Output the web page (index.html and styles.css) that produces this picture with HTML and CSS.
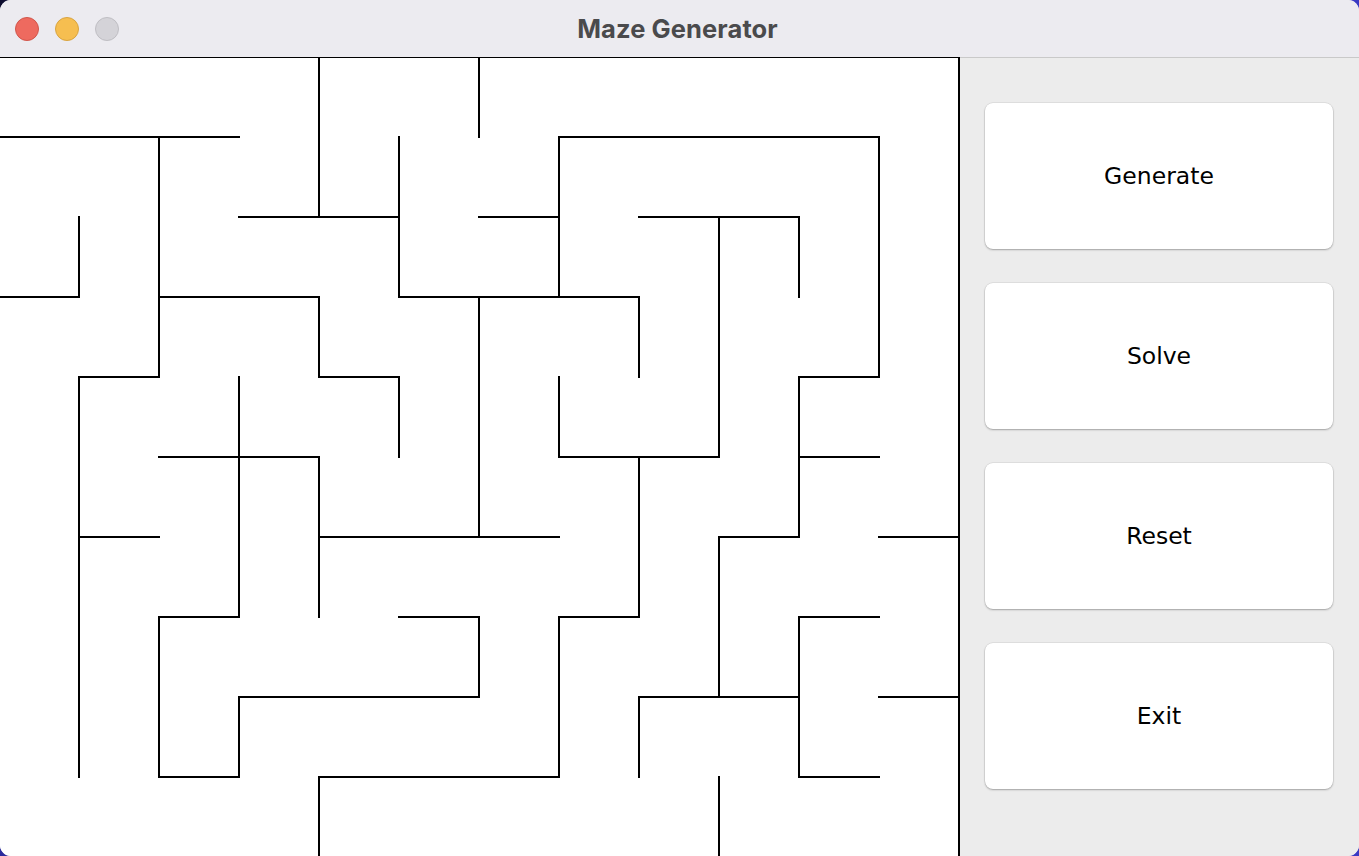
FILE: index.html
```html
<!DOCTYPE html>
<html lang="en">
<head>
<meta charset="utf-8">
<title>Maze Generator</title>
<link rel="stylesheet" href="styles.css">
</head>
<body>
<div class="window">
  <header class="titlebar">
    <div class="lights">
      <span class="light light-close"></span>
      <span class="light light-min"></span>
      <span class="light light-max"></span>
    </div>
    <h1 class="title">Maze Generator</h1>
    <div class="spacer"></div>
  </header>
  <main class="content">
    <div class="maze">
      <svg class="maze-svg" width="960" height="799" viewBox="0 0 960 799" xmlns="http://www.w3.org/2000/svg">
        <path class="walls" d="M-1 0H959
M-1 80H239 M559 80H879
M239 160H399 M479 160H559 M639 160H799
M-1 240H79 M159 240H319 M399 240H639
M79 320H159 M319 320H399 M799 320H879
M159 400H319 M559 400H719 M799 400H879
M79 480H159 M319 480H559 M719 480H799 M879 480H959
M159 560H239 M399 560H479 M559 560H639 M799 560H879
M239 640H479 M639 640H799 M879 640H959
M159 720H239 M319 720H559 M799 720H879
M79 160V240 M79 320V720
M159 80V320 M159 560V720
M239 320V560 M239 640V720
M319 0V160 M319 240V320 M319 400V560 M319 720V800
M399 80V240 M399 320V400
M479 0V80 M479 240V480 M479 560V640
M559 80V240 M559 320V400 M559 560V720
M639 240V320 M639 400V560 M639 640V720
M719 160V400 M719 480V640 M719 720V800
M799 160V240 M799 320V480 M799 560V720
M879 80V320
M959 0V800"/>
      </svg>
    </div>
    <aside class="panel">
      <button class="btn">Generate</button>
      <button class="btn">Solve</button>
      <button class="btn">Reset</button>
      <button class="btn">Exit</button>
    </aside>
  </main>
</div>
</body>
</html>
```

FILE: styles.css
```css
* {
  box-sizing: border-box;
}

html, body {
  margin: 0;
  padding: 0;
  width: 1359px;
  height: 856px;
  overflow: hidden;
}

body {
  background: linear-gradient(100deg, #0c0c2c 0%, #2a2a9a 8%, #3838c2 40%, #3a3ac4 100%);
}

.window {
  width: 1359px;
  height: 856px;
  border-radius: 11px;
  overflow: hidden;
  display: flex;
  flex-direction: column;
  background: #ececec;
}

.titlebar {
  height: 57px;
  flex: none;
  background: #ecebf0;
  display: grid;
  grid-template-columns: 1fr auto 1fr;
  align-items: center;
}

.lights {
  display: flex;
  gap: 16px;
  padding-left: 15px;
  padding-top: 1px;
}

.light {
  width: 24px;
  height: 24px;
  border-radius: 50%;
  display: block;
}

.light-close {
  background: #ee6a5f;
  border: 1px solid #d1564b;
}

.light-min {
  background: #f6be50;
  border: 1px solid #d8a441;
}

.light-max {
  background: #d4d3d8;
  border: 1px solid #bfbec3;
}

.title {
  margin: 0;
  font-family: Inter, "Liberation Sans", sans-serif;
  font-weight: 700;
  font-size: 25.5px;
  color: #4a4a4c;
  letter-spacing: 0.1px;
  padding-right: 4px;
}

.content {
  flex: 1;
  display: flex;
  min-height: 0;
}

.maze {
  width: 960px;
  flex: none;
  background: #ffffff;
  overflow: hidden;
}

.maze-svg {
  display: block;
}

.walls {
  fill: none;
  stroke: #000000;
  stroke-width: 2;
  stroke-linecap: square;
  shape-rendering: crispEdges;
}

.panel {
  flex: 1;
  background: #ececec;
  border-top: 1px solid #c9c9c9;
  padding: 45px 26px 0 25px;
  display: flex;
  flex-direction: column;
  gap: 34px;
}

.btn {
  height: 146px;
  width: 100%;
  border: none;
  border-radius: 8px;
  background: #ffffff;
  box-shadow: 0 0 0 0.5px rgba(0, 0, 0, 0.10), 0 1px 2px rgba(0, 0, 0, 0.28);
  font-family: "DejaVu Sans", "Liberation Sans", sans-serif;
  font-size: 23.5px;
  color: #000000;
  padding: 0;
  cursor: pointer;
}
```
